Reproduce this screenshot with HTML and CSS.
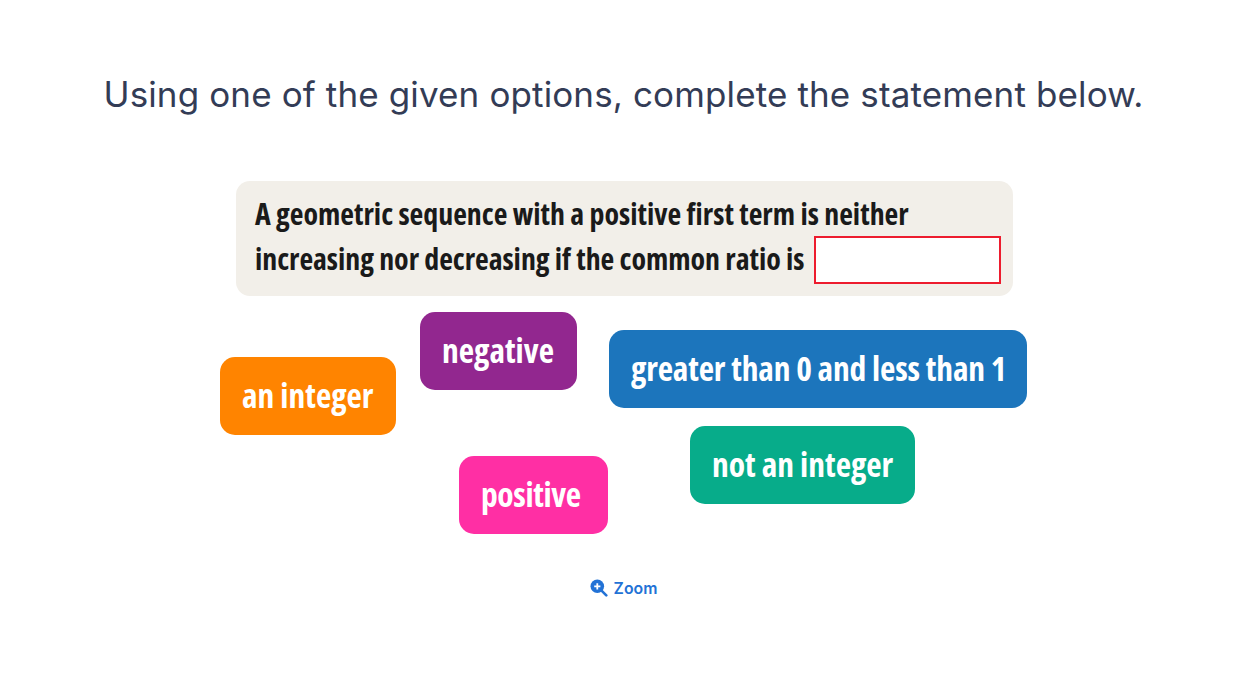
FILE: index.html
```html
<!DOCTYPE html>
<html lang="en">
<head>
  <meta charset="UTF-8" />
  <title>Complete the statement</title>
  <link rel="stylesheet" href="styles.css">
</head>
<body>
  <h1 class="prompt">Using one of the given options, complete the statement below.</h1>

  <div class="stage">
    <div class="statement">
      <div>A geometric sequence with a positive first term is neither</div>
      <div class="statement-last">increasing nor decreasing if the common ratio is <span class="blank"></span></div>
    </div>

    <div class="chip chip-integer">an integer</div>
    <div class="chip chip-negative">negative</div>
    <div class="chip chip-between">greater than 0 and less than 1</div>
    <div class="chip chip-not">not an integer</div>
    <div class="chip chip-positive">positive</div>
  </div>

  <div class="zoom">
    <svg class="zoom-icon" viewBox="0 0 18 18" width="18" height="18">
      <circle cx="7.3" cy="7.3" r="6.8" fill="#2272d6" />
      <path d="M11.8 11.8L16.3 16.3" stroke="#2272d6" stroke-width="2.6" stroke-linecap="round" />
      <path d="M7.3 4.2v6.2M4.2 7.3h6.2" stroke="#fff" stroke-width="1.8" />
    </svg>
    <span>Zoom</span>
  </div>
</body>
</html>
```

FILE: styles.css
```css
* {
  box-sizing: border-box;
}

body {
  margin: 0;
  height: 691px;
  overflow: hidden;
  background: #fff;
  font-family: 'Open Sans', 'Liberation Sans', sans-serif;
  font-stretch: 75%;
}

.prompt {
  margin: 0;
  padding-top: 72px;
  height: 180.5px;
  text-align: center;
  font-family: 'Inter', sans-serif;
  font-stretch: 100%;
  font-size: 35px;
  line-height: 44px;
  letter-spacing: 0.13px;
  font-weight: 400;
  color: #333c56;
}

.stage {
  position: relative;
  height: 373.5px;
}

.statement {
  margin-left: 235.5px;
  width: 777px;
  height: 115.5px;
  padding: 11.5px 19.5px;
  background: #f2efe9;
  border-radius: 14px;
  font-size: 29.9px;
  line-height: 44px;
  font-weight: bold;
  color: #1a1a1a;
  white-space: nowrap;
}

.statement-last {
  display: flex;
  align-items: flex-start;
  gap: 10px;
  line-height: 46px;
  letter-spacing: -0.04px;
}

.blank {
  display: block;
  flex-shrink: 0;
  width: 187px;
  height: 48px;
  background: #fff;
  border: 2px solid #ed1c2e;
}

/* options sit loose on the canvas, so each one has its own place */
.chip {
  position: absolute;
  height: 78px;
  padding: 0 22px;
  border-radius: 15px;
  color: #fff;
  font-size: 33.5px;
  font-weight: bold;
  line-height: 76px;
  white-space: nowrap;
}

.chip-integer { left: 220px; top: 176.5px; width: 176px; background: #ff8400; }
.chip-negative { left: 420px; top: 131.5px; width: 157px; background: #92278f; }
.chip-between { left: 609px; top: 149.5px; width: 418px; background: #1c75bc; letter-spacing: -0.15px; }
.chip-not { left: 690px; top: 245.5px; width: 225px; background: #07ac8a; }
.chip-positive { left: 459px; top: 275.5px; width: 149px; background: #ff2fa4; letter-spacing: -0.4px; }

.zoom {
  display: flex;
  justify-content: center;
  align-items: center;
  gap: 6px;
  height: 24px;
  margin-top: 22px;
  font-family: 'Inter', sans-serif;
  font-stretch: 100%;
  font-size: 15.8px;
  font-weight: 600;
  color: #2272d6;
}
```
